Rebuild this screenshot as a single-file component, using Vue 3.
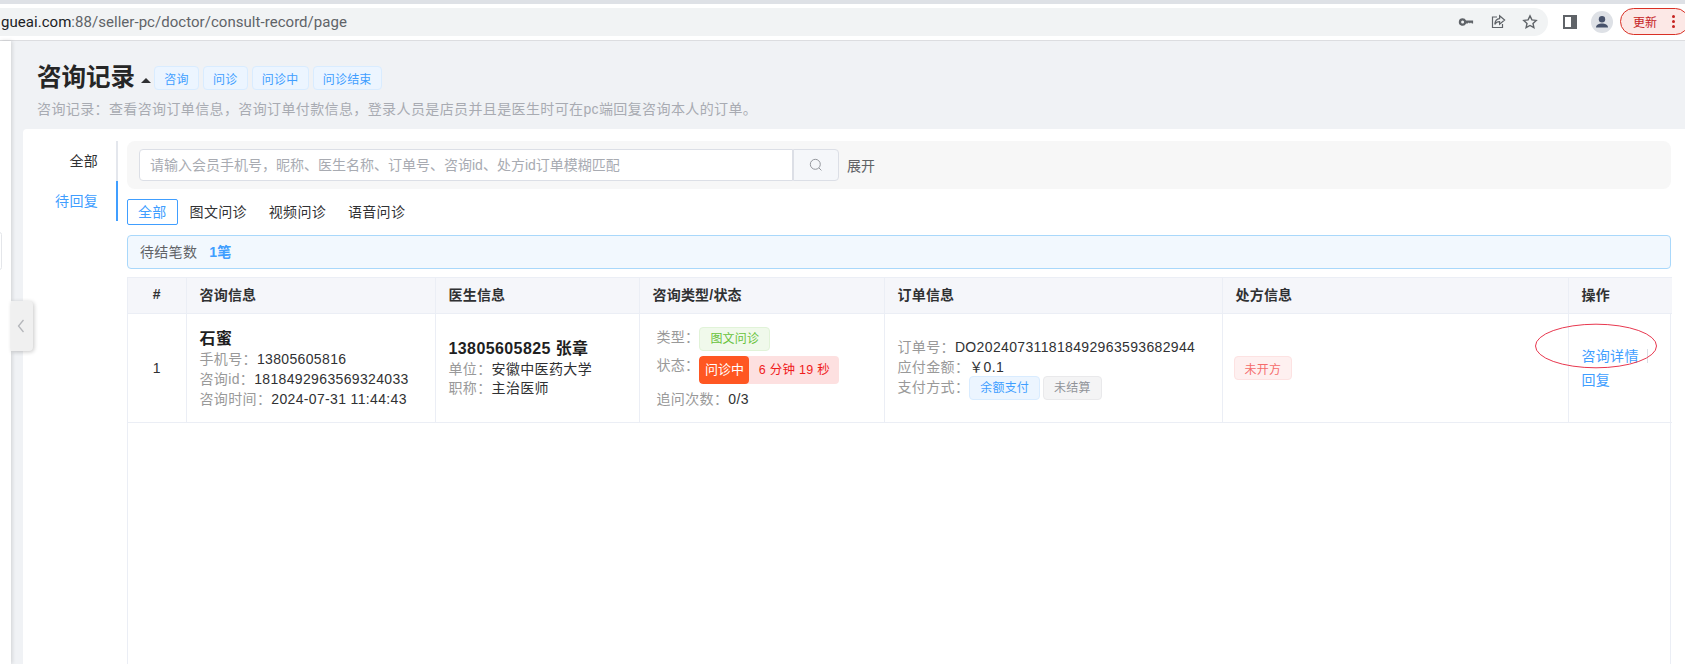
<script setup>
const tags = ['咨询', '问诊', '问诊中', '问诊结束']
const tabs = ['全部', '图文问诊', '视频问诊', '语音问诊']
const columns = ['#', '咨询信息', '医生信息', '咨询类型/状态', '订单信息', '处方信息', '操作']
const widths = [58, 249, 204, 245, 338, 346, 104]
</script>

<template>
  <div class="page">
    <header class="chrome">
      <div class="chrome-row">
        <div class="url-bar">
          <span class="url"><span class="url-host">gueai.com</span>:88/seller-pc/doctor/consult-record/page</span>
          <svg class="bar-icon" viewBox="0 0 16 16" width="16" height="16"><path fill="#5f6368" d="M4.6 4.2a3.8 3.8 0 1 0 3.5 5.3h1.6l1.1-1 1.1 1 1.1-1 .9.9h1.2V6.6H8.1a3.8 3.8 0 0 0-3.5-2.4zm0 2.3a1.5 1.5 0 1 1 0 3 1.5 1.5 0 0 1 0-3z" /></svg>
          <svg class="bar-icon" viewBox="0 0 16 16" width="16" height="16"><path fill="none" stroke="#5f6368" stroke-width="1.2" d="M7 3H2.500v10.500h10V10M9.600 1.800 14.600 6l-5 4.200V7.700C7.400 7.700 5.800 8.600 4.800 10.400c.2-3.300 2-5.500 4.800-5.800z" /></svg>
          <svg class="bar-icon" viewBox="0 0 16 16" width="16" height="16"><path fill="none" stroke="#5f6368" stroke-width="1.4" d="m8 1.900 1.900 4 4.300.5-3.200 3 .9 4.300L8 11.500l-3.900 2.200.9-4.300-3.200-3 4.300-.5z" /></svg>
        </div>
        <div class="side-panel"></div>
        <svg class="avatar" viewBox="0 0 22 22" width="22" height="22"><circle cx="11" cy="11" r="11" fill="#dee1e6" /><circle cx="11" cy="8.300" r="3.200" fill="#47526b" /><path fill="#47526b" d="M5 16.500c0-2.600 3-3.900 6-3.900s6 1.300 6 3.900z" /></svg>
        <div class="update">
          <span>更新</span>
          <i class="dots"><b></b><b></b><b></b></i>
        </div>
      </div>
    </header>

    <div class="body">
      <aside class="rail"><span class="rail-mark"></span></aside>
      <button class="collapse" type="button">
        <svg viewBox="0 0 8 16" width="8" height="16"><path fill="none" stroke="#b4b6ba" stroke-width="1.300" d="M6.500 2 1.500 8l5 6" /></svg>
      </button>

      <main class="main">
        <section class="page-head">
          <div class="title-row">
            <h1>咨询记录</h1>
            <span class="caret"></span>
            <span v-for="t in tags" :key="t" class="tag tag-blue head-tag">{{ t }}</span>
          </div>
          <p class="subtitle">咨询记录：查看咨询订单信息，咨询订单付款信息，登录人员是店员并且是医生时可在pc端回复咨询本人的订单。</p>
        </section>

        <section class="card">
          <nav class="side-nav">
            <div class="nav-item">全部</div>
            <div class="nav-item active">待回复</div>
          </nav>

          <div class="content">
            <div class="search-wrap">
              <div class="search-group">
                <div class="search-input">请输入会员手机号，昵称、医生名称、订单号、咨询id、处方id订单模糊匹配</div>
                <div class="search-btn">
                  <svg viewBox="0 0 16 16" width="14" height="14"><circle cx="7.200" cy="7.200" r="5.700" fill="none" stroke="#909399" stroke-width="1.100" /><path d="m11.400 11.400 2.800 2.800" stroke="#909399" stroke-width="1.100" /></svg>
                </div>
              </div>
              <span class="expand">展开</span>
            </div>

            <div class="tabs">
              <span v-for="(t, i) in tabs" :key="t" class="tab" :class="{ current: i === 0 }">{{ t }}</span>
            </div>

            <div class="alert">
              <span>待结笔数</span>
              <b>1笔</b>
            </div>

            <div class="table-wrap">
              <table>
                <colgroup>
                  <col v-for="(w, i) in widths" :key="i" :style="{ width: w + 'px' }" />
                </colgroup>
                <thead>
                  <tr>
                    <th v-for="(c, i) in columns" :key="c" :class="{ center: i === 0 }">{{ c }}</th>
                  </tr>
                </thead>
                <tbody>
                  <tr>
                    <td class="center index">1</td>
                    <td>
                      <div class="name">石蜜</div>
                      <div class="line"><span class="lbl">手机号：</span>13805605816</div>
                      <div class="line"><span class="lbl">咨询id：</span>1818492963569324033</div>
                      <div class="line"><span class="lbl">咨询时间：</span>2024-07-31 11:44:43</div>
                    </td>
                    <td>
                      <div class="name doctor">13805605825 张章</div>
                      <div class="line tight"><span class="lbl">单位：</span>安徽中医药大学</div>
                      <div class="line tight"><span class="lbl">职称：</span>主治医师</div>
                    </td>
                    <td class="status-cell">
                      <div class="status-row"><span class="lbl">类型：</span><span class="tag tag-green">图文问诊</span></div>
                      <div class="status-row state-row">
                        <span class="lbl">状态：</span>
                        <span class="state"><span class="state-on">问诊中</span><span class="state-time">6 分钟 19 秒</span></span>
                      </div>
                      <div class="line count"><span class="lbl">追问次数：</span>0/3</div>
                    </td>
                    <td class="order-cell">
                      <div class="line"><span class="lbl">订单号：</span>DO202407311818492963593682944</div>
                      <div class="line"><span class="lbl">应付金额：</span>￥0.1</div>
                      <div class="line pay">
                        <span class="lbl">支付方式：</span>
                        <span class="tag tag-blue">余额支付</span>
                        <span class="tag tag-gray">未结算</span>
                      </div>
                    </td>
                    <td class="rx-cell"><span class="tag tag-red">未开方</span></td>
                    <td class="ops">
                      <a class="op first">咨询详情<i></i></a>
                      <a class="op">回复</a>
                      <svg class="ring" viewBox="0 0 124 46" width="124" height="46"><ellipse cx="62" cy="23" rx="60.500" ry="21.800" fill="none" stroke="#e8384f" stroke-width="1" /></svg>
                    </td>
                  </tr>
                </tbody>
              </table>
            </div>
          </div>
        </section>
      </main>
    </div>
  </div>
</template>

<style>
html, body { margin: 0; background: #fff; }
</style>

<style scoped>
.page {
  width: 1685px;
  height: 664px;
  overflow: hidden;
  display: flex;
  flex-direction: column;
  font-family: "Liberation Sans", "Noto Sans CJK SC", sans-serif;
  font-size: 14px;
  color: #303133;
  background: #f0f2f5;
}
.chrome {
  flex: none;
  height: 41px;
  box-sizing: border-box;
  border-top: 4px solid #dee1e6;
  border-bottom: 1px solid #dcdde0;
  background: #fff;
}
.chrome-row { display: flex; align-items: flex-start; padding-top: 4px; }
.url-bar {
  width: 1548px;
  height: 28px;
  flex: none;
  box-sizing: border-box;
  display: flex;
  align-items: center;
  padding-right: 10px;
  background: #f1f3f4;
  border-radius: 0 14px 14px 0;
}
.url {
  flex: 1;
  margin-left: 1px;
  font-family: Roboto, "Liberation Sans", sans-serif;
  font-size: 15px;
  letter-spacing: .04px;
  color: #5f6368;
  white-space: nowrap;
}
.url-host { color: #202124; }
.bar-icon { margin-left: 16px; flex: none; }
.side-panel {
  flex: none;
  margin: 7px 0 0 15px;
  width: 14px;
  height: 14px;
  box-sizing: border-box;
  border: 2px solid #5f6368;
  border-right-width: 6px;
  background: #fff;
}
.avatar { flex: none; margin: 3px 0 0 14px; }
.update {
  flex: none;
  margin-left: 7px;
  width: 69px;
  height: 27px;
  box-sizing: border-box;
  display: flex;
  align-items: center;
  border: 1px solid #d93025;
  border-radius: 14px;
  background: #fce8e6;
  color: #c5221f;
  font-size: 12px;
  padding-left: 12px;
}
.dots { display: flex; flex-direction: column; gap: 2px; margin-left: 15px; }
.dots b { width: 3px; height: 3px; border-radius: 50%; background: #c5221f; }

.body { position: relative; flex: 1; display: flex; min-height: 0; }
.rail {
  flex: none;
  width: 11px;
  position: relative;
  background: #fff;
  box-shadow: 1px 0 4px rgba(0, 0, 0, .14);
}
.rail-mark {
  position: absolute;
  left: -3px;
  top: 191px;
  width: 3px;
  height: 36px;
  border: 1px solid #e4e6ea;
  border-radius: 3px;
}
.collapse {
  position: absolute;
  left: 11px;
  top: 260px;
  width: 22px;
  height: 50px;
  padding: 0 2px 0 0;
  border: 0;
  border-radius: 0 4px 4px 0;
  background: #f0f0f0;
  box-shadow: 1px 1px 4px rgba(0, 0, 0, .22);
  display: flex;
  align-items: center;
  justify-content: center;
}
.main { flex: 1; min-width: 0; display: flex; flex-direction: column; padding-left: 12px; }
.page-head { flex: none; height: 88px; box-sizing: border-box; padding: 25px 0 0 14px; }
.title-row { display: flex; align-items: center; height: 24px; }
h1 { margin: 0; font-size: 24.500px; line-height: 24px; font-weight: 700; color: #262626; }
.caret {
  margin: 4px 3px 0 6px;
  width: 0;
  height: 0;
  border: 5px solid transparent;
  border-top: 0;
  border-bottom: 5px solid #303133;
}
.tag {
  display: inline-flex;
  align-items: center;
  justify-content: center;
  box-sizing: border-box;
  height: 24px;
  padding: 0 10px;
  border: 1px solid;
  border-radius: 4px;
  font-size: 12px;
  letter-spacing: .2px;
  white-space: nowrap;
}
.head-tag { margin-right: 4px; padding: 0 9.200px; }
.tag-blue { color: #409eff; background: #ecf5ff; border-color: #d9ecff; }
.tag-green { color: #67c23a; background: #f0f9eb; border-color: #e1f3d8; }
.tag-gray { color: #909399; background: #f4f4f5; border-color: #e9e9eb; }
.tag-red { color: #f56c6c; background: #fef0f0; border-color: #fde2e2; }
.subtitle { margin: 9px 0 0; font-size: 14px; letter-spacing: .38px; line-height: 20px; color: #a8abb2; white-space: nowrap; }

.card {
  flex: 1;
  min-height: 0;
  display: flex;
  background: #fff;
  border-radius: 4px 0 0 0;
  padding: 12px 14px 0 0;
}
.side-nav { flex: none; width: 93px; height: 80px; border-right: 2px solid #e4e7ed; }
.nav-item {
  height: 40px;
  line-height: 40px;
  text-align: right;
  padding-right: 19px;
  margin-right: -2px;
  letter-spacing: .3px;
  color: #303133;
}
.nav-item:first-child { padding-right: 20px; }
.nav-item.active { padding-right: 18px; color: #409eff; border-right: 2px solid #409eff; }
.content { flex: 1; min-width: 0; margin-left: 9px; display: flex; flex-direction: column; }
.search-wrap {
  flex: none;
  height: 48px;
  box-sizing: border-box;
  display: flex;
  align-items: center;
  padding-left: 12px;
  background: #f7f7f7;
  border-radius: 8px;
}
.search-group { display: flex; width: 700px; height: 32px; }
.search-input {
  flex: 1;
  box-sizing: border-box;
  line-height: 30px;
  padding-left: 10px;
  background: #fff;
  border: 1px solid #dcdfe6;
  border-radius: 4px 0 0 4px;
  color: #a8abb2;
  white-space: nowrap;
}
.search-btn {
  width: 46px;
  box-sizing: border-box;
  display: flex;
  align-items: center;
  justify-content: center;
  background: #f5f7fa;
  border: 1px solid #dcdfe6;
  border-left: 1px solid #dcdfe6;
  border-radius: 0 4px 4px 0;
}
.expand { margin-left: 8px; color: #606266; }
.tabs { flex: none; display: flex; height: 26px; margin-top: 10px; }
.tab {
  box-sizing: border-box;
  height: 26px;
  line-height: 24px;
  padding: 0 10px;
  border: 1px solid transparent;
  border-radius: 2px;
  letter-spacing: .3px;
  color: #303133;
}
.tab.current { margin-right: 1px; color: #409eff; border-color: #409eff; }
.alert {
  flex: none;
  height: 34px;
  margin-top: 10px;
  box-sizing: border-box;
  display: flex;
  align-items: center;
  gap: 12px;
  padding: 0 0 2px 12px;
  background: #f2f8fe;
  border: 1px solid #a9d8fb;
  border-radius: 4px;
  letter-spacing: .3px;
  color: #606266;
}
.alert b { color: #409eff; font-weight: 700; }
.table-wrap {
  flex: 1;
  min-height: 0;
  margin-top: 8px;
  box-sizing: border-box;
  border-left: 1px solid #ebeef5;
  border-right: 1px solid #ebeef5;
}
table { width: 100%; table-layout: fixed; border-collapse: collapse; }
th, td { border: 1px solid #ebeef5; text-align: left; padding: 0 0 0 13px; }
tr > :first-child { border-left: 0; }
tr > :last-child { border-right: 0; }
th {
  height: 32px;
  padding-bottom: 3px;
  background: #f5f6fa;
  font-size: 14px;
  font-weight: 700;
  letter-spacing: .2px;
  color: #303133;
}
td { height: 108px; vertical-align: middle; }
th.center, td.center { text-align: center; padding: 0; }
th.center { padding-bottom: 3px; }
.index { color: #303133; }
.name { font-size: 16px; font-weight: 700; line-height: 21px; letter-spacing: .4px; color: #1f1f1f; }
.doctor { margin-bottom: 1px; }
.line { line-height: 20px; letter-spacing: .35px; color: #303133; white-space: nowrap; }
.line.tight { line-height: 19px; }
.lbl { color: #999; }
.status-cell { padding-left: 17px; }
.status-row { display: flex; line-height: 20px; }
.status-row .lbl { letter-spacing: .3px; }
.state-row { margin-top: 5px; }
.state-row .lbl { line-height: 18px; }
.state { display: inline-flex; height: 28px; border-radius: 4px; overflow: hidden; background: #fde0e0; }
.state-on { width: 50px; display: flex; align-items: center; justify-content: center; background: #ff5722; color: #fff; font-size: 13px; border-radius: 4px; }
.state-time { width: 90px; display: flex; align-items: center; justify-content: center; color: #f01c1c; font-size: 12.500px; letter-spacing: .3px; }
.count { margin-top: 5px; }
td.order-cell { height: 105px; padding-bottom: 3px; }
.pay { display: flex; align-items: center; height: 20px; }
.pay .tag { margin-top: 3px; }
.pay .tag-gray { margin-left: 3px; }
.rx-cell { padding-left: 11px; }
.ops { position: relative; }
.op { display: block; line-height: 24px; letter-spacing: .3px; color: #409eff; }
.first { position: relative; }
.first i {
  position: absolute;
  left: 65px;
  top: 5px;
  width: 1px;
  height: 14px;
  background: #dcdfe6;
}
.ring { position: absolute; left: -35px; top: 9px; }
</style>
